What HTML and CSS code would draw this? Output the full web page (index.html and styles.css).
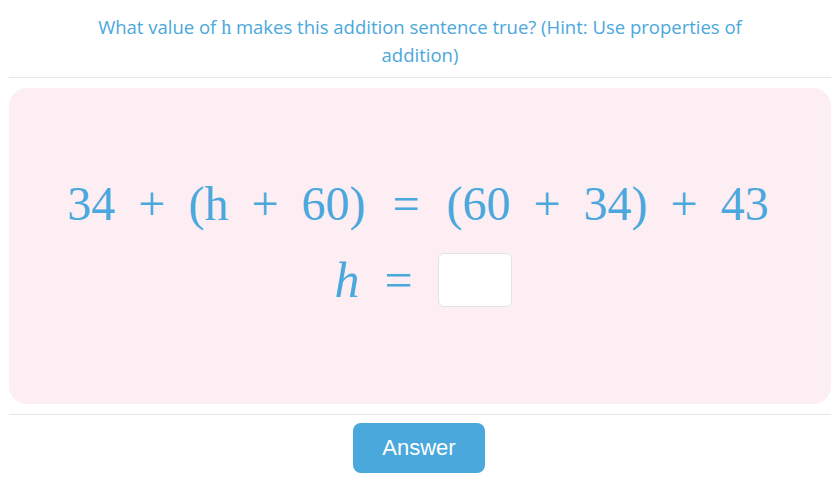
FILE: index.html
```html
<!DOCTYPE html>
<html>
<head>
<meta charset="utf-8">
<link rel="stylesheet" href="styles.css">
</head>
<body>
<div class="page">
  <div class="question">What value of <span class="var">h</span> makes this addition sentence true? (Hint: Use properties of addition)</div>
  <hr class="rule">
  <div class="card">
    <div class="eq">
      <span>34</span><span class="op">+</span><span>(h</span><span class="op">+</span><span>60)</span><span class="rel">=</span><span>(60</span><span class="op">+</span><span>34)</span><span class="op">+</span><span>43</span>
    </div>
    <div class="eq eq2">
      <span class="it">h</span><span class="rel">=</span><span class="box"></span>
    </div>
  </div>
  <hr class="rule">
  <div class="actions">
    <button class="btn">Answer</button>
  </div>
</div>
</body>
</html>
```

FILE: styles.css
```css
html, body {
  margin: 0;
  padding: 0;
  background: #ffffff;
}
.page {
  width: 840px;
  padding: 0 9px 0 9px;
  box-sizing: border-box;
}
.question {
  font-family: "Open Sans", sans-serif;
  font-size: 18.5px;
  line-height: 27px;
  color: #4aa8dc;
  text-align: center;
  padding: 13px 60px 9px;
}
.var {
  font-family: "Liberation Serif", serif;
  font-size: 20px;
}
.rule {
  border: 0;
  border-top: 1px solid #e4e8ec;
  margin: 0;
}
.card {
  margin-top: 10px;
  height: 316px;
  background: #fdeef4;
  border-radius: 18px;
  display: flex;
  flex-direction: column;
  align-items: center;
  padding-top: 86px;
  box-sizing: border-box;
  margin-bottom: 10px;
}
.eq {
  font-family: "Liberation Serif", serif;
  font-size: 48px;
  line-height: 60px;
  color: #4aa8dc;
  display: flex;
  align-items: center;
  white-space: nowrap;
}
.eq:first-child {
  margin-right: 4px;
}
.op {
  margin: 0 0.48em;
}
.rel {
  margin: 0 0.56em;
}
.eq2 {
  margin-top: 16px;
  margin-left: 6px;
  font-size: 50px;
}
.eq2 .rel {
  margin: 0 0.5em;
}
.it {
  font-style: italic;
}
.box {
  display: inline-block;
  width: 72px;
  height: 52px;
  background: #ffffff;
  border: 1px solid #dfe3ea;
  border-radius: 6px;
}
.actions {
  display: flex;
  justify-content: center;
  padding-top: 8px;
}
.btn {
  width: 132px;
  height: 50px;
  background: #4aa8dc;
  border: 0;
  border-radius: 8px;
  color: #ffffff;
  font-family: "Liberation Sans", Arial, sans-serif;
  font-size: 22px;
  margin-right: 2px;
}
```
